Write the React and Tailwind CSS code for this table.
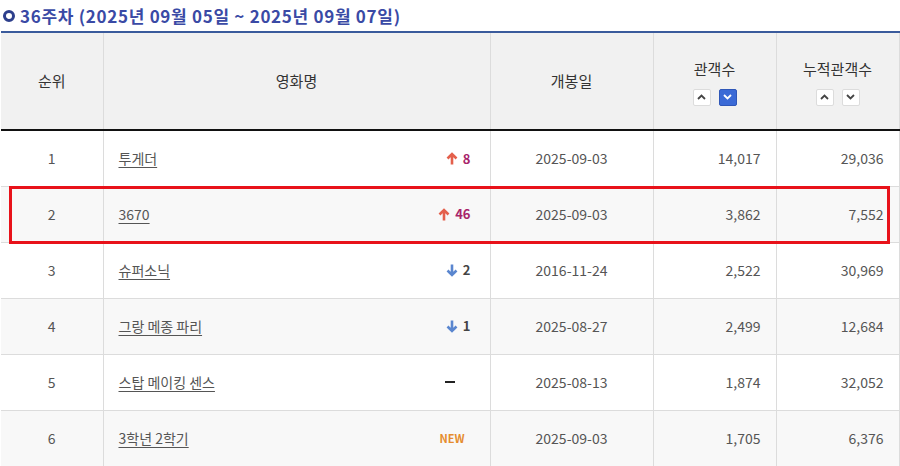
import React from "react";

const rows = [
  { rank: 1, title: "투게더", change: { type: "up", n: 8 }, open: "2025-09-03", aud: "14,017", total: "29,036" },
  { rank: 2, title: "3670", change: { type: "up", n: 46 }, open: "2025-09-03", aud: "3,862", total: "7,552" },
  { rank: 3, title: "슈퍼소닉", change: { type: "down", n: 2 }, open: "2016-11-24", aud: "2,522", total: "30,969" },
  { rank: 4, title: "그랑 메종 파리", change: { type: "down", n: 1 }, open: "2025-08-27", aud: "2,499", total: "12,684" },
  { rank: 5, title: "스탑 메이킹 센스", change: { type: "same" }, open: "2025-08-13", aud: "1,874", total: "32,052" },
  { rank: 6, title: "3학년 2학기", change: { type: "new" }, open: "2025-09-03", aud: "1,705", total: "6,376" },
];

function Arrow({ dir }) {
  const color = dir === "up" ? "#e4604c" : "#5a86cf";
  return (
    <svg width="12" height="13" viewBox="0 0 12 13" className="mr-[5px]">
      {dir === "up" ? (
        <path d="M6 12.5V2.5M1.5 6.5L6 2L10.5 6.5" stroke={color} strokeWidth="2.6" fill="none" />
      ) : (
        <path d="M6 0.5V10.5M1.5 6.5L6 11L10.5 6.5" stroke={color} strokeWidth="2.6" fill="none" />
      )}
    </svg>
  );
}

function Change({ c }) {
  if (c.type === "new") return <span className="text-[11px] font-bold text-[#e58c2e] mr-[6px]">NEW</span>;
  if (c.type === "same") return <span className="inline-block w-[10px] h-[2px] bg-[#222] mr-[16px]" />;
  return (
    <span className="flex items-center">
      <Arrow dir={c.type} />
      <span className={"text-[13px] font-bold " + (c.type === "up" ? "text-[#a8246a]" : "text-[#444]")}>{c.n}</span>
    </span>
  );
}

function SortBtn({ dir, active }) {
  return (
    <span
      className={
        "w-[18px] h-[17px] flex items-center justify-center rounded-[2px] border " +
        (active ? "bg-[#3b6ad6] border-[#2f57b8]" : "bg-white border-[#dcdcdc]")
      }
    >
      <svg width="9" height="6" viewBox="0 0 9 6">
        <path
          d={dir === "up" ? "M1 5L4.5 1.5L8 5" : "M1 1L4.5 4.5L8 1"}
          stroke={active ? "#fff" : "#444"}
          strokeWidth="1.8"
          fill="none"
        />
      </svg>
    </span>
  );
}

export default function App() {
  const font = { fontFamily: '"Noto Sans CJK KR", "Noto Sans", sans-serif' };
  return (
    <div className="w-[900px] h-[466px] bg-white overflow-hidden relative" style={font}>
      <div className="h-[31px] flex items-center pl-[3px]">
        <span className="w-[12px] h-[12px] rounded-full border-[3px] border-[#2d3f8c] mr-[5px]" />
        <span className="text-[17px] font-bold text-[#3a4aa5] tracking-[0.7px]">
          36주차 (2025년 09월 05일 ~ 2025년 09월 07일)
        </span>
      </div>
      <table className="table-fixed border-collapse w-[898px] ml-px border-t-2 border-[#3a5b9c] text-[14px] text-[#555]">
        <colgroup>
          <col className="w-[102px]" />
          <col className="w-[387px]" />
          <col className="w-[163px]" />
          <col className="w-[123px]" />
          <col className="w-[123px]" />
        </colgroup>
        <thead>
          <tr className="h-[98px] bg-[#f1f1f1] border-b-2 border-[#111] text-[15px] text-[#333]">
            <th className="font-normal border-r border-[#dcdcdc]">순위</th>
            <th className="font-normal border-r border-[#dcdcdc]">영화명</th>
            <th className="font-normal border-r border-[#dcdcdc]">개봉일</th>
            <th className="font-normal border-r border-[#dcdcdc]">
              <div className="flex flex-col items-center gap-[8px] pt-[2px]">
                <span>관객수</span>
                <span className="flex gap-[8px]">
                  <SortBtn dir="up" />
                  <SortBtn dir="down" active />
                </span>
              </div>
            </th>
            <th className="font-normal border-r border-[#dcdcdc]">
              <div className="flex flex-col items-center gap-[8px] pt-[2px]">
                <span>누적관객수</span>
                <span className="flex gap-[8px]">
                  <SortBtn dir="up" />
                  <SortBtn dir="down" />
                </span>
              </div>
            </th>
          </tr>
        </thead>
        <tbody>
          {rows.map((r, i) => (
            <tr key={r.rank} className={"h-[56px] border-b border-[#dcdcdc] " + (i % 2 ? "bg-[#f8f8f8]" : "bg-white")}>
              <td className="text-center border-r border-[#dcdcdc]">{r.rank}</td>
              <td className="border-r border-[#dcdcdc] pl-[15px] pr-[19px]">
                <div className="flex items-center justify-between">
                  <span className="underline underline-offset-[3px]">{r.title}</span>
                  <Change c={r.change} />
                </div>
              </td>
              <td className="text-center border-r border-[#dcdcdc]">{r.open}</td>
              <td className="text-right pr-[15px] border-r border-[#dcdcdc]">{r.aud}</td>
              <td className="text-right pr-[15px] border-r border-[#dcdcdc]">{r.total}</td>
            </tr>
          ))}
        </tbody>
      </table>
      <div className="absolute left-[9px] top-[186px] w-[881px] h-[58px] border-[3px] border-[#e8121a] pointer-events-none" />
    </div>
  );
}
